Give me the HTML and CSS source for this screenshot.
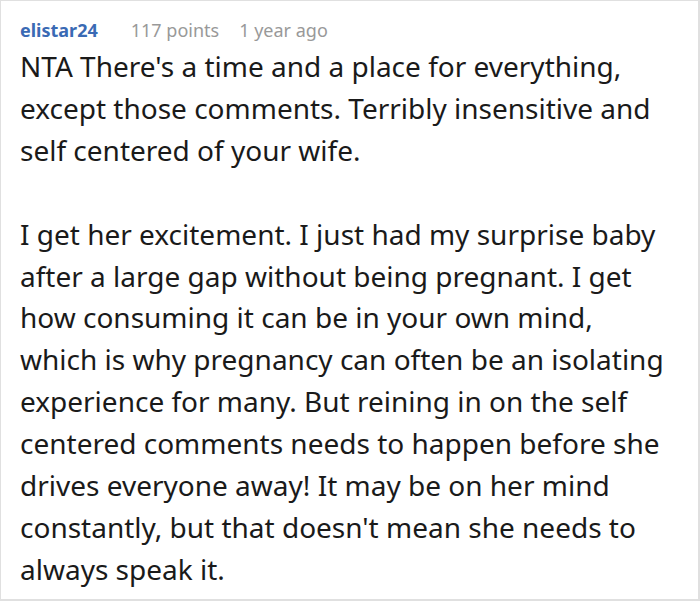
FILE: index.html
```html
<!DOCTYPE html>
<html>
<head>
<meta charset="utf-8">
<link rel="stylesheet" href="styles.css">
</head>
<body>
<div class="comment">
  <div class="meta">
    <span class="user">elistar24</span>
    <span class="points">117 points</span>
    <span class="time">1 year ago</span>
  </div>
  <div class="text">
    <p>NTA There's a time and a place for everything, except those comments. Terribly insensitive and self centered of your wife.</p>
    <p>I get her excitement. I just had my surprise baby after a large gap without being pregnant. I get how consuming it can be in your own mind, which is why pregnancy can often be an isolating experience for many. But reining in on the self centered comments needs to happen before she drives everyone away! It may be on her mind constantly, but that doesn't mean she needs to always speak it.</p>
  </div>
</div>
</body>
</html>
```
FILE: styles.css
```css
html, body {
  margin: 0;
  padding: 0;
  background: #fff;
}
.comment {
  box-sizing: border-box;
  width: 700px;
  height: 601px;
  border: 1px solid #e0e0e0;
  border-right-width: 2px;
  border-bottom-width: 2px;
  padding: 17px 23px 0 19px;
  font-family: "Noto Sans", sans-serif;
  overflow: hidden;
}
.meta {
  display: flex;
  align-items: baseline;
  font-size: 18px;
  line-height: 24px;
}
.user {
  font-weight: bold;
  color: #3a6ab4;
  margin-right: 33px;
}
.points, .time {
  color: #999;
}
.points {
  margin-right: 20px;
}
.text {
  margin-top: 4px;
  font-size: 28px;
  line-height: 41.9px;
  color: #1a1a1a;
}
.text p {
  margin: 0 0 41.9px 0;
}
```
